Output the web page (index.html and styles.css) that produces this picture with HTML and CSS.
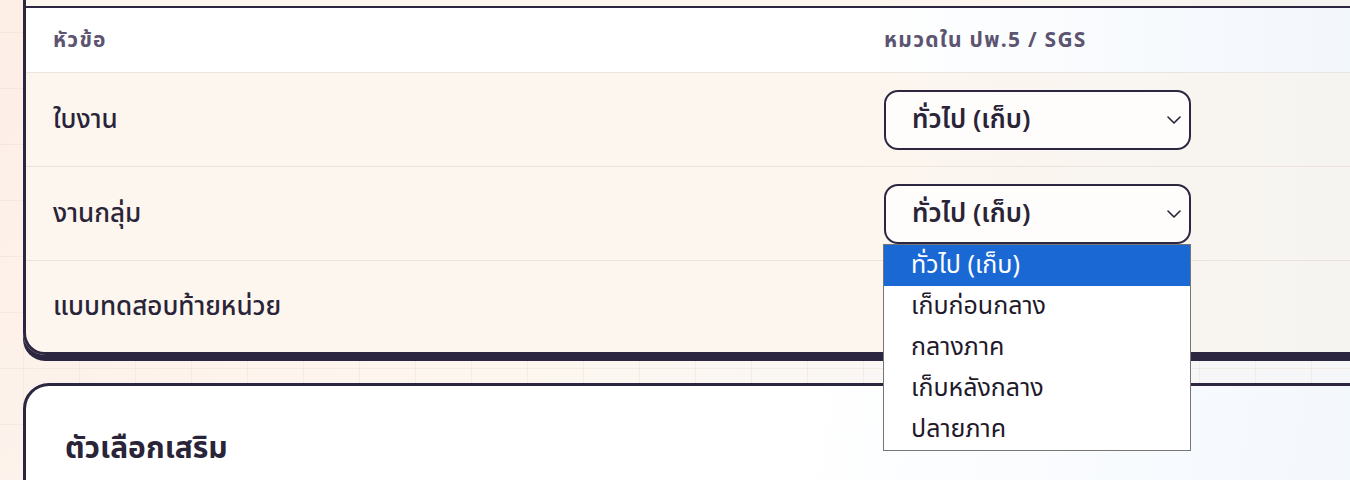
FILE: index.html
```html
<!DOCTYPE html>
<html lang="th">
<head>
    <meta charset="UTF-8">
    <meta name="viewport" content="width=device-width, initial-scale=1.0">
    <title>ตั้งค่าหมวดคะแนน</title>
    <link rel="stylesheet" href="styles.css">
</head>
<body>
    <div class="page">
        <div class="card map-card">
            <div class="map-table">
                <div class="map-head">
                    <div class="cell">หัวข้อ</div>
                    <div class="cell">หมวดใน ปพ.5 / SGS</div>
                </div>

                <div class="map-row">
                    <div class="cell label">ใบงาน</div>
                    <div class="cell">
                        <div class="select-wrap">
                            <select class="category-select">
                                <option selected>ทั่วไป (เก็บ)</option>
                                <option>เก็บก่อนกลาง</option>
                                <option>กลางภาค</option>
                                <option>เก็บหลังกลาง</option>
                                <option>ปลายภาค</option>
                            </select>
                            <svg class="chevron" width="14" height="8" viewBox="0 0 14 8"><path d="M1 1l6 6 6-6" fill="none" stroke="#2a2438" stroke-width="1.6" stroke-linecap="round" stroke-linejoin="round"/></svg>
                        </div>
                    </div>
                </div>

                <div class="map-row">
                    <div class="cell label">งานกลุ่ม</div>
                    <div class="cell">
                        <div class="select-wrap open">
                            <select class="category-select">
                                <option selected>ทั่วไป (เก็บ)</option>
                                <option>เก็บก่อนกลาง</option>
                                <option>กลางภาค</option>
                                <option>เก็บหลังกลาง</option>
                                <option>ปลายภาค</option>
                            </select>
                            <svg class="chevron" width="14" height="8" viewBox="0 0 14 8"><path d="M1 1l6 6 6-6" fill="none" stroke="#2a2438" stroke-width="1.6" stroke-linecap="round" stroke-linejoin="round"/></svg>
                            <ul class="dropdown">
                                <li class="active">ทั่วไป (เก็บ)</li>
                                <li>เก็บก่อนกลาง</li>
                                <li>กลางภาค</li>
                                <li>เก็บหลังกลาง</li>
                                <li>ปลายภาค</li>
                            </ul>
                        </div>
                    </div>
                </div>

                <div class="map-row last">
                    <div class="cell label">แบบทดสอบท้ายหน่วย</div>
                    <div class="cell"></div>
                </div>
            </div>
        </div>

        <div class="card extra-card">
            <h2 class="section-title">ตัวเลือกเสริม</h2>
        </div>
    </div>
</body>
</html>
```

FILE: styles.css
```css
html, body {
    margin: 0;
    padding: 0;
}

body {
    font-family: 'Noto Sans Thai', 'Noto Sans', 'Liberation Sans', sans-serif;
    color: #2a2438;
    background-color: #fdf5ee;
    background-image:
        linear-gradient(90deg, rgba(232, 214, 200, 0.35) 1px, transparent 1px),
        linear-gradient(0deg, rgba(232, 214, 200, 0.35) 1px, transparent 1px),
        linear-gradient(135deg, #fdeee6 0%, #fdf7f0 50%, #f4f6fa 100%);
    background-size: 56px 56px, 56px 56px, 100% 100%;
    background-position: 23px 33px, 23px 33px, 0 0;
    height: 480px;
    overflow: hidden;
}

.page {
    padding-left: 23px;
    display: flex;
    flex-direction: column;
    gap: 28px;
}

.card {
    width: 1380px;
    border: 3px solid #2d2640;
    box-sizing: border-box;
    box-shadow: 0 6px 0 #2d2640;
}

.map-card {
    margin-top: -40px;
    padding-top: 43px;
    border-radius: 0 0 22px 22px;
    background: linear-gradient(90deg, #fdf6ef 0%, #fdf6ef 60%, #f5f4f1 100%);
}

.map-table {
    border-top: 2px solid #2d2640;
}

.map-head,
.map-row {
    display: grid;
    grid-template-columns: 831px 1fr;
    align-items: center;
}

.map-head {
    height: 64px;
    background: linear-gradient(90deg, #ffffff 0%, #ffffff 60%, #f1f6fc 100%);
    border-bottom: 1px solid #ebe5e2;
    font-size: 21px;
    font-weight: 700;
    letter-spacing: 0.06em;
    color: #5c5470;
}

.map-row {
    height: 93px;
    border-bottom: 1px solid #ece4dc;
}

.map-row.last {
    height: 91px;
    border-bottom: none;
}

.cell {
    padding: 0 27px;
}

.label {
    font-size: 26px;
    font-weight: 500;
    color: #2a2438;
}

.select-wrap {
    position: relative;
    width: 307px;
}

.category-select {
    appearance: none;
    -webkit-appearance: none;
    width: 100%;
    height: 60px;
    padding: 0 40px 0 26px;
    border: 2px solid #2d2640;
    border-radius: 14px;
    background: #fffdfb;
    font-family: inherit;
    font-size: 26px;
    font-weight: 600;
    color: #2a2438;
    outline: none;
}

.chevron {
    position: absolute;
    right: 10px;
    top: 26px;
    pointer-events: none;
}

.dropdown {
    position: absolute;
    left: -1px;
    top: 60px;
    width: 308px;
    margin: 0;
    padding: 0;
    list-style: none;
    background: #ffffff;
    border: 1px solid #767676;
    box-sizing: border-box;
    z-index: 10;
}

.dropdown li {
    height: 41px;
    line-height: 41px;
    padding-left: 27px;
    font-size: 25px;
    color: #1f1a2b;
}

.dropdown li.active {
    background: #1a68d4;
    color: #ffffff;
}

.extra-card {
    height: 140px;
    border-radius: 26px 0 0 0;
    background: linear-gradient(100deg, #ffffff 0%, #ffffff 55%, #f2f7fd 100%);
    padding: 42px 39px 0;
}

.section-title {
    margin: 0;
    font-size: 30px;
    font-weight: 700;
    line-height: 1.4;
    color: #2a2438;
}
```
